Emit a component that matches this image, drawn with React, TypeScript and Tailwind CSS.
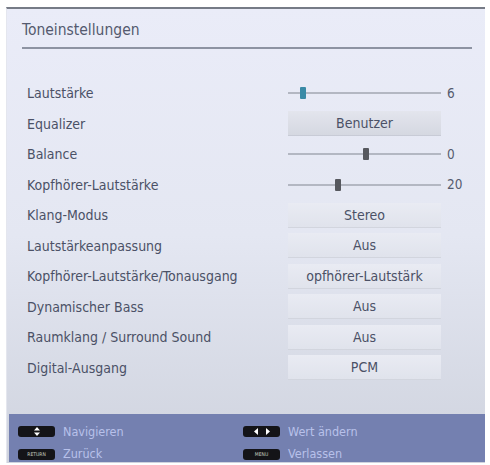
import React from "react";

type Row =
  | { label: string; kind: "slider"; pos: number; value: string; thumb: string }
  | { label: string; kind: "box"; value: string; strong?: boolean };

const rows: Row[] = [
  { label: "Lautstärke", kind: "slider", pos: 12, value: "6", thumb: "bg-[#3a8aa6]" },
  { label: "Equalizer", kind: "box", value: "Benutzer", strong: true },
  { label: "Balance", kind: "slider", pos: 75, value: "0", thumb: "bg-[#56585e]" },
  { label: "Kopfhörer-Lautstärke", kind: "slider", pos: 47, value: "20", thumb: "bg-[#56585e]" },
  { label: "Klang-Modus", kind: "box", value: "Stereo" },
  { label: "Lautstärkeanpassung", kind: "box", value: "Aus" },
  { label: "Kopfhörer-Lautstärke/Tonausgang", kind: "box", value: "opfhörer-Lautstärk" },
  { label: "Dynamischer Bass", kind: "box", value: "Aus" },
  { label: "Raumklang / Surround Sound", kind: "box", value: "Aus" },
  { label: "Digital-Ausgang", kind: "box", value: "PCM" },
];

const font = { fontFamily: '"DejaVu Sans Condensed", "DejaVu Sans", sans-serif' };

function Key({ children }: { children: React.ReactNode }) {
  return (
    <div className="w-[37px] h-[11px] rounded-[3px] bg-[#141418] flex items-center justify-center text-[5px] leading-none text-[#c8d0c0] font-normal">
      {children}
    </div>
  );
}

export default function App() {
  return (
    <div className="w-[490px] h-[465px] bg-white pt-[7px] pl-[6px]" style={font}>
      <div className="w-[479px] h-[456px] border-t-2 border-[#767b86] border-l border-l-[#e4e6ee] bg-gradient-to-b from-[#eaecf8] via-[#e4e7f2] to-[#cfd3de] flex flex-col">
        <div className="pl-[15px] pt-[11px] text-[15.5px] leading-[20px] text-[#545a6e]">Toneinstellungen</div>
        <div className="ml-[15px] mr-[13px] mt-[7px] h-[2px] bg-[#8d93a2]" />
        <div className="mt-[29px] pl-[20px] flex flex-col">
          {rows.map((r) => (
            <div key={r.label} className="h-[30.5px] flex items-center">
              <div className="w-[261px] text-[14px] text-[#4b5166] leading-none">{r.label}</div>
              {r.kind === "slider" ? (
                <div className="flex items-center">
                  <div className="relative w-[153px] h-[12px] flex items-center">
                    <div className="w-full h-[2px] bg-[#b3b7c2]" />
                    <div
                      className={"absolute top-0 w-[6px] h-[12px] rounded-[1px] " + r.thumb}
                      style={{ left: r.pos + "px" }}
                    />
                  </div>
                  <div className="ml-[6px] text-[13.5px] text-[#555b6e] leading-none">{r.value}</div>
                </div>
              ) : (
                <div
                  className={
                    "w-[153px] h-[25px] flex items-center justify-center text-[14px] text-[#4b5166] leading-none " +
                    (r.strong
                      ? "bg-gradient-to-b from-[#e3e5ed] to-[#d5d8e1] border-b border-[#c8cbd6]"
                      : "bg-gradient-to-b from-[#e9ebf3] to-[#e0e3ec] border-b border-[#d2d5de]")
                  }
                >
                  {r.value}
                </div>
              )}
            </div>
          ))}
        </div>
        <div className="mt-auto ml-[2px] mb-[1px] h-[48px] bg-[#7480b0] grid grid-cols-[225px_1fr] content-start pt-[11.5px] gap-y-[10px] pl-[9px] text-[12.5px] text-[#b8c1ea] leading-none">
          <div className="flex items-center gap-[8px]">
            <Key>
              <svg width="6" height="9" viewBox="0 0 6 9">
                <path d="M3 0 L6 3.5 H0 Z M3 9 L6 5.5 H0 Z" fill="#fff" />
              </svg>
            </Key>
            <span>Navigieren</span>
          </div>
          <div className="flex items-center gap-[8px]">
            <Key>
              <svg width="16" height="7" viewBox="0 0 16 7">
                <path d="M0 3.5 L4 0 V7 Z M16 3.5 L12 0 V7 Z" fill="#fff" />
              </svg>
            </Key>
            <span>Wert ändern</span>
          </div>
          <div className="flex items-center gap-[8px]">
            <Key>RETURN</Key>
            <span>Zurück</span>
          </div>
          <div className="flex items-center gap-[8px]">
            <Key>MENU</Key>
            <span>Verlassen</span>
          </div>
        </div>
      </div>
    </div>
  );
}
